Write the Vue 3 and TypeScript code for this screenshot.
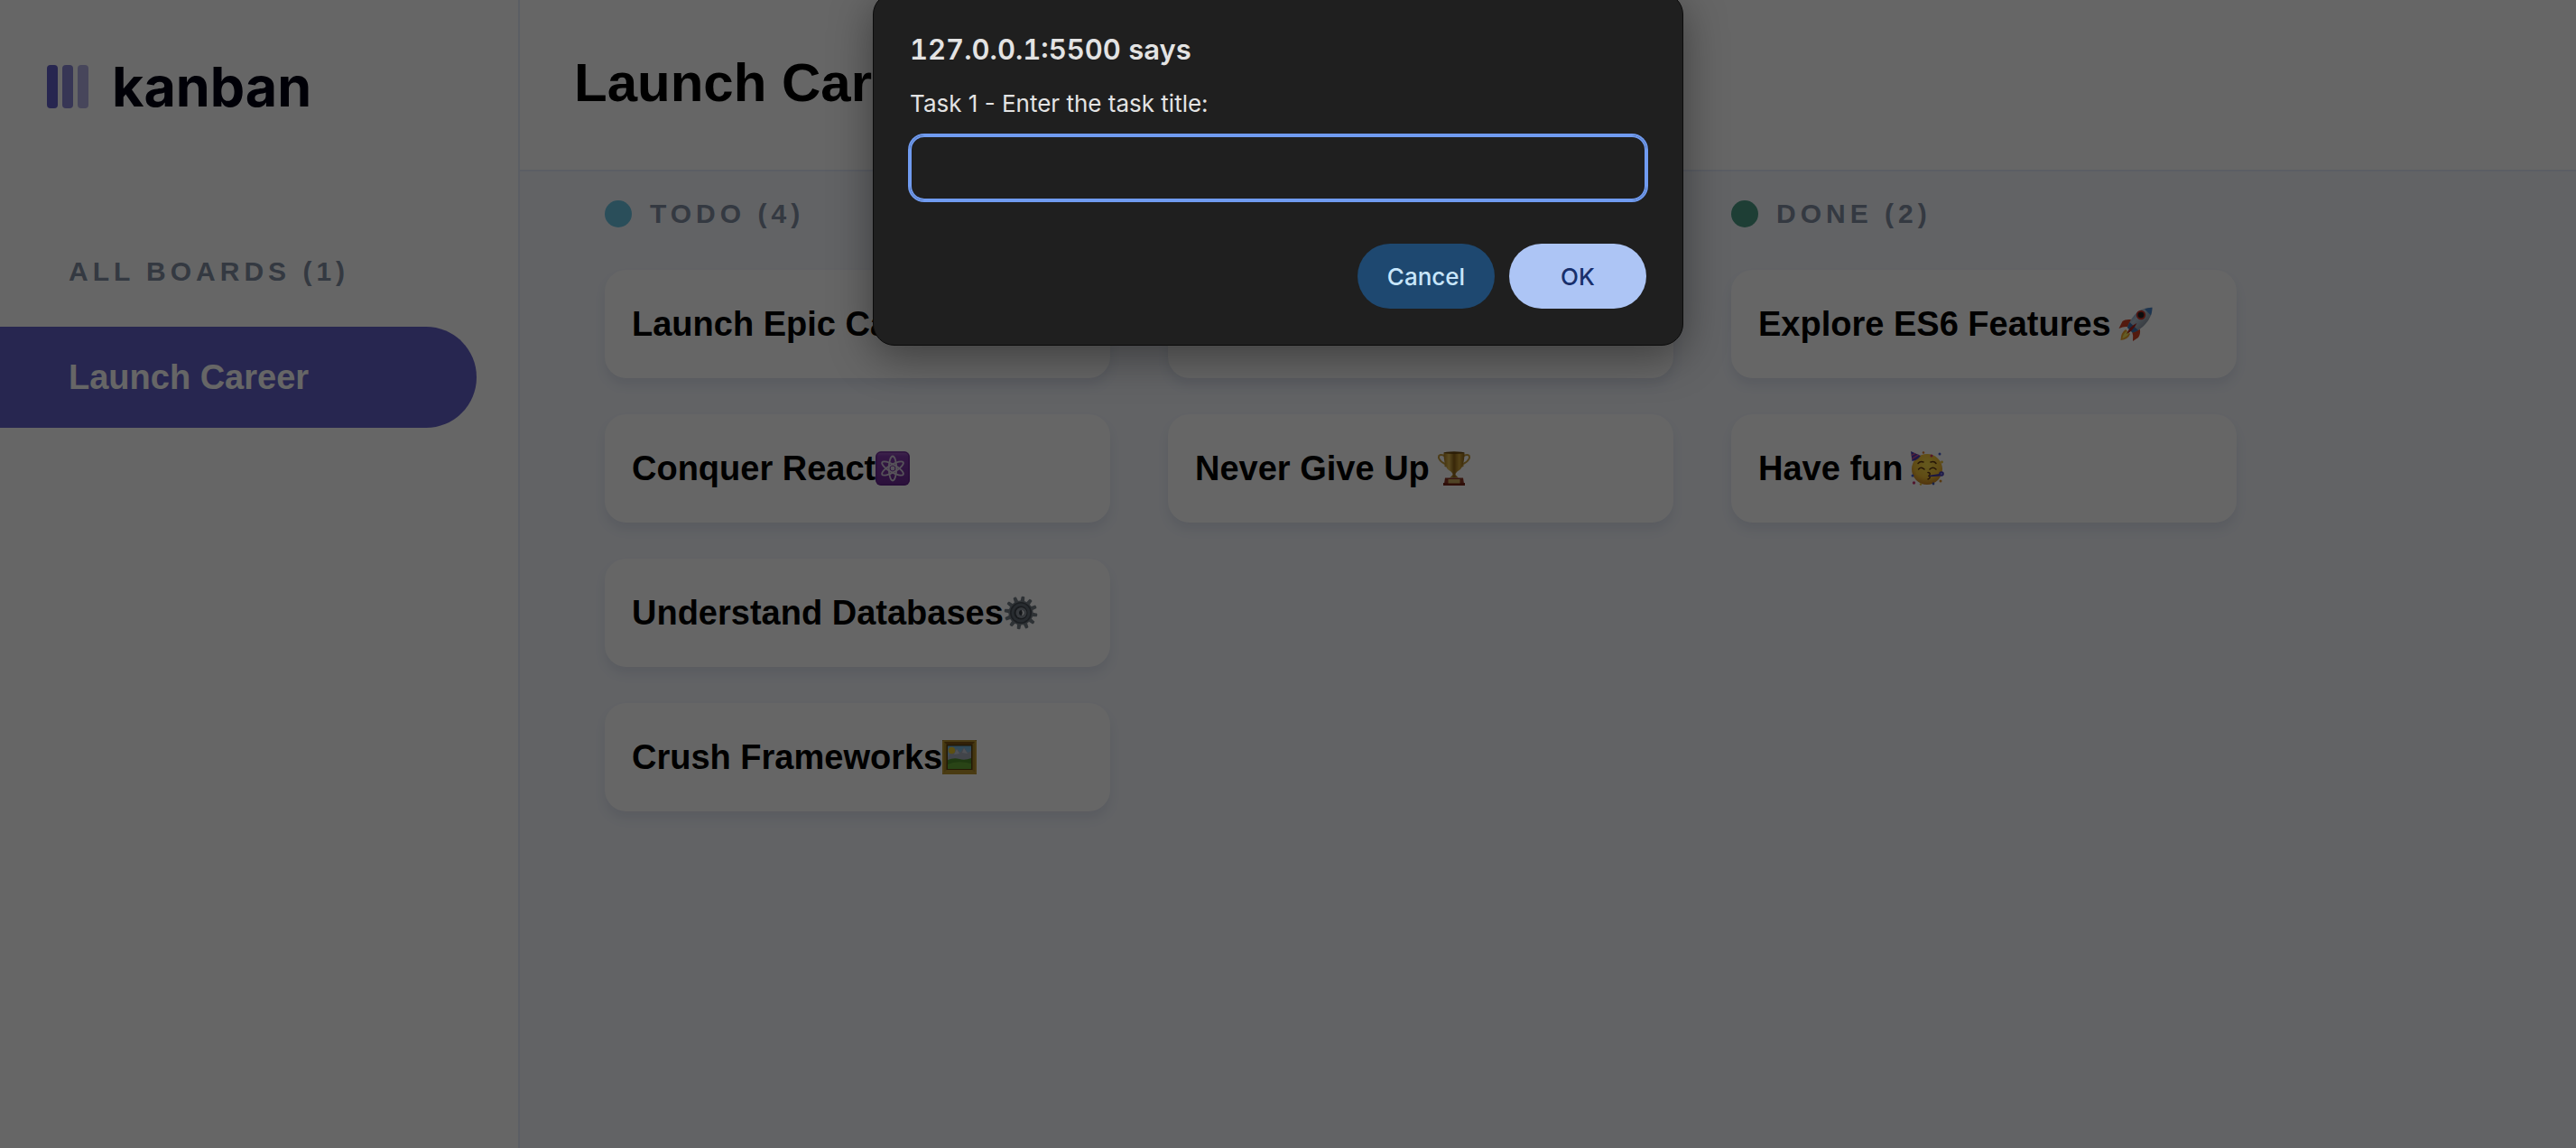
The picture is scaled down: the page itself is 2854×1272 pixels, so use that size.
<script setup lang="ts">
import { ref } from 'vue'

type Emoji = 'atom' | 'gear' | 'picture' | 'trophy' | 'rocket' | 'party'

interface Task {
  title: string
  emoji?: Emoji
  spaced?: boolean
}

interface Column {
  key: string
  name: string
  tasks: Task[]
}

const boards = ref<string[]>(['Launch Career'])
const activeBoard = ref('Launch Career')
const taskTitle = ref('')

const columns = ref<Column[]>([
  {
    key: 'todo',
    name: 'TODO',
    tasks: [
      { title: 'Launch Epic Career' },
      { title: 'Conquer React', emoji: 'atom' },
      { title: 'Understand Databases', emoji: 'gear' },
      { title: 'Crush Frameworks', emoji: 'picture' },
    ],
  },
  {
    key: 'doing',
    name: 'DOING',
    tasks: [{ title: '' }, { title: 'Never Give Up', emoji: 'trophy', spaced: true }],
  },
  {
    key: 'done',
    name: 'DONE',
    tasks: [
      { title: 'Explore ES6 Features', emoji: 'rocket', spaced: true },
      { title: 'Have fun', emoji: 'party', spaced: true },
    ],
  },
])

const teeth = Array.from({ length: 12 }, (_, i) => i * 30 + 8)
</script>

<template>
  <div class="app">
    <aside class="sidebar">
      <div class="logo">
        <svg class="logo-mark" viewBox="0 0 46 48" aria-hidden="true">
          <rect x="0" y="0" width="12" height="48" rx="4" fill="#635fc7" />
          <rect x="17" y="0" width="12" height="48" rx="4" fill="#635fc7" opacity="0.75" />
          <rect x="34" y="0" width="12" height="48" rx="4" fill="#635fc7" opacity="0.5" />
        </svg>
        <span class="logo-text">kanban</span>
      </div>
      <h2 class="boards-title">ALL BOARDS ({{ boards.length }})</h2>
      <nav class="boards">
        <a
          v-for="board in boards"
          :key="board"
          href="#"
          class="board-link"
          :class="{ active: board === activeBoard }"
          @click.prevent="activeBoard = board"
          >{{ board }}</a
        >
      </nav>
    </aside>

    <div class="main">
      <header class="header">
        <h1>{{ activeBoard }}</h1>
      </header>
      <main class="columns">
        <section v-for="column in columns" :key="column.key" class="column">
          <div class="column-head">
            <span class="dot" :class="column.key"></span>
            <h2>{{ column.name }} ({{ column.tasks.length }})</h2>
          </div>
          <article v-for="(task, i) in column.tasks" :key="i" class="card">
            <h3>{{ task.title }}</h3>
            <svg
              v-if="task.emoji"
              class="emoji"
              :class="{ spaced: task.spaced }"
              viewBox="0 0 38 38"
              aria-hidden="true"
            >
              <g v-if="task.emoji === 'atom'">
                <defs>
                  <linearGradient id="atom-bg" x1="0" y1="0" x2="0" y2="1">
                    <stop offset="0" stop-color="#a566c6" />
                    <stop offset="0.15" stop-color="#823bab" />
                    <stop offset="1" stop-color="#6c2a94" />
                  </linearGradient>
                </defs>
                <rect x="0" y="0" width="38" height="38" rx="6" fill="url(#atom-bg)" />
                <rect x="1" y="1" width="36" height="36" rx="5" fill="none" stroke="#5e2086" stroke-width="1" />
                <g fill="none" stroke="#d8cfdf" stroke-width="1.8">
                  <ellipse cx="19" cy="19" rx="4.2" ry="13.5" />
                  <ellipse cx="19" cy="19" rx="4.2" ry="13.5" transform="rotate(60 19 19)" />
                  <ellipse cx="19" cy="19" rx="4.2" ry="13.5" transform="rotate(120 19 19)" />
                </g>
                <circle cx="19" cy="19" r="2.4" fill="#d8cfdf" />
              </g>

              <g v-else-if="task.emoji === 'gear'">
                <path
                  v-for="angle in teeth"
                  :key="angle"
                  d="M16.6 8 L17.2 1 Q19 0 20.8 1 L21.4 8 Z"
                  fill="#747d86"
                  :transform="`rotate(${angle} 19 19)`"
                />
                <circle cx="19" cy="19" r="13.6" fill="#747d86" />
                <circle cx="19" cy="19" r="12" fill="#454c54" />
                <circle cx="19" cy="19" r="10.4" fill="#636c76" />
                <circle cx="19" cy="19" r="7.6" fill="#3c434a" />
                <circle cx="19.5" cy="19" r="6" fill="#848d97" />
                <circle cx="20" cy="19" r="3" fill="#353b42" />
                <path d="M20 16.1 a2.9 2.9 0 0 1 0 5.8 q1.6 -2.9 0 -5.8 Z" fill="#e4e8ec" />
              </g>

              <g v-else-if="task.emoji === 'picture'">
                <defs>
                  <linearGradient id="sky" x1="0" y1="0" x2="0" y2="1">
                    <stop offset="0" stop-color="#6fb4dc" />
                    <stop offset="1" stop-color="#c3cfdd" />
                  </linearGradient>
                </defs>
                <rect x="0" y="0" width="38" height="38" fill="#a8852a" />
                <path d="M0 0 H38 L32 6 H6 Z" fill="#7c5414" />
                <path d="M0 38 H38 L32 32 H6 Z" fill="#b9942f" />
                <path d="M1 1 H37 M37 1 V37 M1 1 V37" stroke="#c7a33a" stroke-width="1.4" fill="none" />
                <rect x="4.5" y="5" width="29" height="28" fill="#5b3f0f" />
                <rect x="6" y="6.5" width="26" height="25.5" fill="url(#sky)" />
                <path d="M6 19 L10 13 13 15 16 9 20 14 24 8 28 14 32 12 V23 H6 Z" fill="#a6acb9" />
                <path d="M13 16 L16 10 19 15 Z M22 14 L24 9 28 15 Z" fill="#c9ced8" />
                <circle cx="10.5" cy="11.5" r="3.8" fill="#e8c52c" />
                <path d="M6 22 Q13 19 19 21 T32 20 V32 H6 Z" fill="#4f8f2c" />
                <path d="M6 27 Q16 22 32 26 V32 H6 Z" fill="#68ab38" />
              </g>

              <g v-else-if="task.emoji === 'trophy'">
                <defs>
                  <linearGradient id="gold" x1="0" y1="0" x2="1" y2="0">
                    <stop offset="0" stop-color="#a87a1f" />
                    <stop offset="0.25" stop-color="#e2bd55" />
                    <stop offset="0.5" stop-color="#8d6216" />
                    <stop offset="0.75" stop-color="#d0a53b" />
                    <stop offset="1" stop-color="#8d6216" />
                  </linearGradient>
                </defs>
                <g fill="none" stroke="#c29a3c" stroke-width="2">
                  <path d="M8.5 5 Q1.5 2.5 2 7 Q3 11 8 13.5 Q10.5 15 9 17" />
                  <path d="M29.5 5 Q36.5 2.5 36 7 Q35 11 30 13.5 Q27.5 15 29 17" />
                </g>
                <path
                  d="M7.5 1.5 H30.5 Q30.5 18 24 21.5 Q20.5 23.5 20.5 26 L24 29.5 H14 L17.5 26 Q17.5 23.5 14 21.5 Q7.5 18 7.5 1.5 Z"
                  fill="url(#gold)"
                />
                <ellipse cx="19" cy="1.6" rx="11.5" ry="1.3" fill="#6f4c10" />
                <path d="M9 29.5 H29 L30 36 H8 Z" fill="#8a3524" />
                <rect x="7" y="35" width="24" height="3" fill="#752516" />
                <rect x="12.5" y="31" width="13" height="4.5" fill="#c9aa5c" />
              </g>

              <g v-else-if="task.emoji === 'rocket'">
                <defs>
                  <linearGradient id="hull" x1="0" y1="0" x2="1" y2="1">
                    <stop offset="0" stop-color="#3f78b8" />
                    <stop offset="0.4" stop-color="#b9c7d6" />
                    <stop offset="0.7" stop-color="#8f9aa7" />
                    <stop offset="1" stop-color="#4d5966" />
                  </linearGradient>
                </defs>
                <path d="M14 14 Q7 13.5 4.5 16 L0.5 24 Q7 21 12 22.5 Z" fill="#cf3f24" />
                <path d="M24 25 Q24.5 31 22 34 L16 38 Q17 32 15 27 Z" fill="#cf3f24" />
                <path d="M8 25 Q3 28 2.5 37 Q11 36 13 30 Z" fill="#eda22c" />
                <path d="M9 27 Q5 30 4.5 35 Q9.5 33.5 12 29 Z" fill="#f7e65c" />
                <path
                  d="M37.5 0.8 Q25 0.5 17.5 9.5 Q12 16 10 23 L15.5 28.5 Q24 26 30 19 Q37.5 11 37.5 0.8 Z"
                  fill="url(#hull)"
                />
                <path d="M37.5 0.8 Q33 0.7 29 2.4 L36 9.5 Q37.5 5 37.5 0.8 Z" fill="#4a86c9" />
                <path d="M12.5 17 L22 26 Q18.5 28 15.5 28.5 L10 23 Q11 19.5 12.5 17 Z" fill="#3e72ad" />
                <circle cx="25" cy="9" r="5.2" fill="#c53327" />
                <circle cx="25" cy="9" r="3.3" fill="#1f2126" />
                <path d="M20.5 18 Q13 21 9 30 Q16 27 20.5 18 Z" fill="#a9241f" />
              </g>

              <g v-else>
                <defs>
                  <radialGradient id="face" cx="0.5" cy="0.35" r="0.65">
                    <stop offset="0" stop-color="#f9dc4a" />
                    <stop offset="0.65" stop-color="#f0bd35" />
                    <stop offset="1" stop-color="#c98222" />
                  </radialGradient>
                </defs>
                <circle cx="19" cy="20" r="17" fill="url(#face)" />
                <path d="M1 0 L2.5 11 Q8 10.5 12 5 Z" fill="#4b3fb5" />
                <path d="M1.7 4.5 L6 2.3 M2.2 8.5 L9.5 3.8" stroke="#d94f8f" stroke-width="1.4" />
                <g fill="none" stroke="#5e3612" stroke-width="1.5" stroke-linecap="round">
                  <path d="M9 13.5 Q11.5 10.5 15 12" />
                  <path d="M23 12 Q27 10.5 29 13.5" />
                  <path d="M9.5 20 Q12.5 16.5 16 20" />
                  <path d="M22 20 Q25.5 16.5 29 20" />
                  <path d="M20 23.5 Q24 24 21 27.3 Q24 29 20 31" />
                </g>
                <path d="M21.5 26.8 L33 25 V27.500 L21.5 28.2 Z" fill="#4338a8" />
                <circle cx="35" cy="25" r="2.8" fill="#4a41b8" />
                <circle cx="35" cy="25" r="1.1" fill="#8a83dd" />
                <circle cx="24" cy="5" r="1.5" fill="#d8395d" />
                <circle cx="33" cy="3" r="1.5" fill="#4a62cf" />
                <circle cx="15" cy="1.5" r="1.3" fill="#df7d2d" />
                <circle cx="35.5" cy="12" r="1.4" fill="#e5bd34" />
                <circle cx="3" cy="27" r="1.5" fill="#4a62cf" />
                <circle cx="4.5" cy="35" r="1.7" fill="#c93b74" />
                <circle cx="12" cy="36.5" r="1.3" fill="#e5bd34" />
                <circle cx="26" cy="36" r="1.4" fill="#3f58b5" />
                <circle cx="34" cy="33" r="1.5" fill="#d9902c" />
              </g>
            </svg>
          </article>
        </section>
      </main>
    </div>

    <div class="overlay">
      <form class="dialog" role="dialog" aria-labelledby="prompt-title" @submit.prevent>
        <h2 id="prompt-title">127.0.0.1:5500 says</h2>
        <label for="task-title">Task 1 - Enter the task title:</label>
        <input id="task-title" v-model="taskTitle" type="text" autocomplete="off" />
        <div class="actions">
          <button type="button" class="cancel">Cancel</button>
          <button type="submit" class="ok">OK</button>
        </div>
      </form>
    </div>
  </div>
</template>

<style>
body {
  margin: 0;
  background: #f4f7fd;
}
</style>

<style scoped>
.app,
.app * {
  box-sizing: border-box;
}

.app {
  position: relative;
  display: flex;
  min-height: 100vh;
  overflow: hidden;
  font-family: 'Liberation Sans', Arial, sans-serif;
  color: #000;
}

h1,
h2,
h3 {
  margin: 0;
  font-weight: 700;
}

.sidebar {
  flex: 0 0 576px;
  padding-top: 72px;
  background: #fff;
  border-right: 2px solid #e4ebfa;
}

.logo {
  display: flex;
  align-items: center;
  gap: 26px;
  height: 48px;
  padding-left: 52px;
}

.logo-mark {
  width: 46px;
  height: 48px;
}

.logo-text {
  font-family: Inter, sans-serif;
  font-size: 61px;
  font-weight: 700;
  line-height: 48px;
  color: #000112;
}

.boards-title,
.column-head h2 {
  font-size: 30px;
  line-height: 30px;
  letter-spacing: 5px;
  color: #828fa3;
}

.boards-title {
  margin: 166px 0 46px;
  padding-left: 76px;
}

.board-link {
  display: flex;
  align-items: center;
  width: 92%;
  height: 112px;
  padding-left: 76px;
  border-radius: 0 56px 56px 0;
  font-size: 38px;
  font-weight: 700;
  text-decoration: none;
  color: #828fa3;
}

.board-link.active {
  background: #635fc7;
  color: #fff;
}

.main {
  flex: 1;
  min-width: 0;
  background: #f4f7fd;
}

.header {
  display: flex;
  align-items: center;
  height: 190px;
  padding: 0 60px 4px;
  background: #fff;
  border-bottom: 2px solid #e4ebfa;
}

h1 {
  font-size: 60px;
  line-height: 72px;
}

.columns {
  display: flex;
  gap: 64px;
  padding: 32px 94px;
}

.column {
  display: flex;
  flex: 0 0 560px;
  flex-direction: column;
  gap: 40px;
}

.column-head {
  display: flex;
  align-items: center;
  gap: 20px;
  margin-bottom: 7px;
}

.dot {
  width: 30px;
  height: 30px;
  border-radius: 50%;
  background: #8471f2;
}

.dot.todo {
  background: #6ac3e2;
}

.dot.done {
  background: #4b9b86;
}

.card {
  display: flex;
  align-items: center;
  height: 120px;
  padding: 0 30px;
  border-radius: 24px;
  background: #fff;
  box-shadow: 0 8px 12px rgba(54, 78, 126, 0.1);
}

.card h3 {
  font-size: 38px;
  line-height: 44px;
  white-space: nowrap;
}

.emoji {
  flex: none;
  width: 38px;
  height: 38px;
}

.emoji.spaced {
  margin-left: 8px;
}

.overlay {
  position: absolute;
  inset: 0;
  display: flex;
  align-items: flex-start;
  justify-content: center;
  padding-right: 22px;
  background: rgba(0, 0, 0, 0.6);
}

.dialog {
  display: flex;
  flex-direction: column;
  width: 898px;
  margin-top: -8px;
  padding: 44px 40px 40px;
  border: 1px solid #0b0b0b;
  border-radius: 24px;
  background: #1f1f1f;
  box-shadow: 0 12px 48px rgba(0, 0, 0, 0.4);
  font-family: Inter, 'Noto Sans', sans-serif;
  color: #e3e3e3;
}

.dialog h2 {
  font-size: 31px;
  font-weight: 600;
  font-variant-numeric: tabular-nums;
  line-height: 36px;
}

.dialog label {
  margin: 25px 0 18px;
  font-size: 26px;
  line-height: 34px;
}

.dialog input {
  height: 72px;
  padding: 0 20px;
  border: 2px solid #709bf0;
  border-radius: 16px;
  outline: none;
  background: transparent;
  box-shadow: 0 0 0 2px #709bf0;
  font: inherit;
  font-size: 26px;
  color: inherit;
}

.actions {
  display: flex;
  justify-content: flex-end;
  gap: 16px;
  margin-top: 48px;
}

.actions button {
  width: 152px;
  height: 72px;
  padding: 0;
  border: 0;
  border-radius: 36px;
  font-family: inherit;
  font-size: 26px;
  font-weight: 500;
}

.cancel {
  background: #1e4870;
  color: #c8e6fb;
}

.ok {
  background: #adc5f5;
  color: #182f6c;
}
</style>
